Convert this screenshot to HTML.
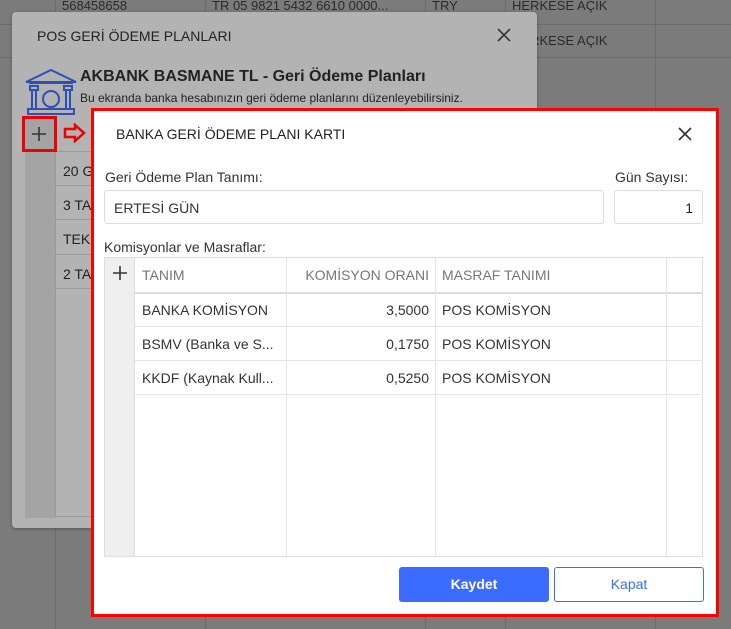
<!DOCTYPE html>
<html><head><meta charset="utf-8"><style>
*{box-sizing:border-box;margin:0;padding:0}
body{width:731px;height:629px;overflow:hidden;background:#7b7b7b;font-family:"Liberation Sans",sans-serif;position:relative;color:#222}
.a{position:absolute}
.bgt{color:#2a2a2a;font-size:13px}
.vl{position:absolute;width:1px;background:#6c6c6c}
.hl{position:absolute;height:1px;background:#6c6c6c}
.cell{position:absolute;font-size:14px;color:#333;white-space:nowrap}
</style></head><body>
<div class="hl" style="left:0;top:24px;width:731px"></div>
<div class="hl" style="left:0;top:57px;width:731px"></div>
<div class="vl" style="left:55px;top:0;height:629px"></div>
<div class="vl" style="left:205px;top:0;height:629px"></div>
<div class="vl" style="left:425px;top:0;height:629px"></div>
<div class="vl" style="left:505px;top:0;height:629px"></div>
<div class="vl" style="left:655px;top:0;height:629px"></div>
<div class="a bgt" style="left:62px;top:-2px">568458658</div>
<div class="a bgt" style="left:212px;top:-2px">TR 05 9821 5432 6610 0000...</div>
<div class="a bgt" style="left:432px;top:-2px">TRY</div>
<div class="a bgt" style="left:512px;top:-2px">HERKESE AÇIK</div>
<div class="a bgt" style="left:512px;top:33px">HERKESE AÇIK</div>
<div class="a" style="left:12px;top:12px;width:525px;height:516px;background:#b3b3b3;border-radius:4px;box-shadow:0 1px 3px rgba(0,0,0,.3)">
 <div class="a" style="left:25px;top:16px;font-size:14px;color:#222">POS GERİ ÖDEME PLANLARI</div>
 <svg class="a" style="left:485px;top:16px" width="14" height="14" viewBox="0 0 14 14" stroke="#333" stroke-width="1.6"><path d="M1 1L13 13M13 1L1 13"/></svg>
 <div class="a" style="left:68px;top:56px;font-size:16px;font-weight:bold;color:#222">AKBANK BASMANE TL - Geri Ödeme Planları</div>
 <div class="a" style="left:68px;top:79px;font-size:12px;color:#222">Bu ekranda banka hesabınızın geri ödeme planlarını düzenleyebilirsiniz.</div>
 <svg class="a" style="left:12px;top:56px" width="54" height="48" viewBox="0 0 54 48" fill="none" stroke="#2f4fb8" stroke-width="2"><path d="M2 14 L27 2 L52 14 Z"/><path d="M5 15h44"/><rect x="6" y="18" width="8" height="4"/><rect x="40" y="18" width="8" height="4"/><path d="M8 22v18M12 22v18M42 22v18M46 22v18"/><rect x="4" y="41" width="46" height="5"/><circle cx="27" cy="31" r="8"/></svg>
 <div class="a" style="left:13px;top:106px;width:30px;height:400px;background:#a4a4a4"></div>
 <div class="a" style="left:43px;top:106px;width:1px;height:400px;background:#999"></div>
 <div class="a" style="left:43px;top:139px;width:480px;height:1px;background:#9c9c9c"></div>
 <div class="a" style="left:43px;top:173px;width:480px;height:1px;background:#9c9c9c"></div>
 <div class="a" style="left:43px;top:207px;width:480px;height:1px;background:#9c9c9c"></div>
 <div class="a" style="left:43px;top:242px;width:480px;height:1px;background:#9c9c9c"></div>
 <div class="a" style="left:43px;top:276px;width:480px;height:1px;background:#9c9c9c"></div>
 <div class="a" style="left:43px;top:504px;width:480px;height:1px;background:#9c9c9c"></div>
 <div class="a" style="left:51px;top:151px;font-size:14px">20 G</div>
 <div class="a" style="left:51px;top:185px;font-size:14px">3 TA</div>
 <div class="a" style="left:51px;top:219px;font-size:14px">TEK</div>
 <div class="a" style="left:51px;top:254px;font-size:14px">2 TA</div>
</div>
<div class="a" style="left:22px;top:116px;width:35px;height:36px;border:3px solid #e00"></div>
<svg class="a" style="left:32px;top:127px" width="14" height="14" viewBox="0 0 14 14" stroke="#333" stroke-width="1.6"><path d="M7 0V14M0 7H14"/></svg>
<svg class="a" style="left:63px;top:123px" width="24" height="20" viewBox="0 0 24 20" fill="none" stroke="#e00" stroke-width="2.5"><path d="M2 6H12V2L21 10L12 18V14H2Z"/></svg>
<div class="a" style="left:91px;top:108px;width:628px;height:509px;border:3px solid #f00;background:#fff">
 <div class="a" style="left:22px;top:15px;font-size:14px">BANKA GERİ ÖDEME PLANI KARTI</div>
 <svg class="a" style="left:584px;top:16px" width="14" height="14" viewBox="0 0 14 14" stroke="#333" stroke-width="1.6"><path d="M1 1L13 13M13 1L1 13"/></svg>
 <div class="a" style="left:11px;top:58px;font-size:14px;color:#333">Geri Ödeme Plan Tanımı:</div>
 <div class="a" style="left:521px;top:58px;font-size:14px;color:#333">Gün Sayısı:</div>
 <div class="a" style="left:10px;top:79px;width:500px;height:34px;border:1px solid #ddd;border-radius:3px;padding:9px 9px;font-size:14px;color:#333">ERTESİ GÜN</div>
 <div class="a" style="left:520px;top:79px;width:89px;height:34px;border:1px solid #ddd;border-radius:3px;padding:9px 9px;font-size:14px;text-align:right">1</div>
 <div class="a" style="left:10px;top:128px;font-size:14px;color:#333">Komisyonlar ve Masraflar:</div>
 <div class="a" style="left:10px;top:146px;width:599px;height:300px;border:1px solid #ddd">
  <div class="a" style="left:0;top:0;width:30px;height:298px;background:#efefef;border-right:1px solid #ddd"></div>
  <svg class="a" style="left:8px;top:8px" width="14" height="14" viewBox="0 0 14 14" stroke="#333" stroke-width="1.6"><path d="M7 0V14M0 7H14"/></svg>
  <div class="a" style="left:30px;top:34px;width:568px;height:2px;background:#ddd"></div>
  <div class="a" style="left:30px;top:68px;width:568px;height:1px;background:#e4e4e4"></div>
  <div class="a" style="left:30px;top:102px;width:568px;height:1px;background:#e4e4e4"></div>
  <div class="a" style="left:30px;top:136px;width:568px;height:1px;background:#e4e4e4"></div>
  <div class="a" style="left:181px;top:0;width:1px;height:298px;background:#e4e4e4"></div>
  <div class="a" style="left:330px;top:0;width:1px;height:298px;background:#e4e4e4"></div>
  <div class="a" style="left:561px;top:0;width:1px;height:298px;background:#e4e4e4"></div>
  <div class="cell" style="left:37px;top:9px;color:#777">TANIM</div>
  <div class="cell" style="left:182px;width:142px;text-align:right;top:9px;color:#777">KOMİSYON ORANI</div>
  <div class="cell" style="left:337px;top:9px;color:#777">MASRAF TANIMI</div>
  <div class="cell" style="left:37px;top:44px">BANKA KOMİSYON</div>
  <div class="cell" style="left:182px;width:142px;text-align:right;top:44px">3,5000</div>
  <div class="cell" style="left:337px;top:44px">POS KOMİSYON</div>
  <div class="cell" style="left:37px;top:78px">BSMV (Banka ve S...</div>
  <div class="cell" style="left:182px;width:142px;text-align:right;top:78px">0,1750</div>
  <div class="cell" style="left:337px;top:78px">POS KOMİSYON</div>
  <div class="cell" style="left:37px;top:112px">KKDF (Kaynak Kull...</div>
  <div class="cell" style="left:182px;width:142px;text-align:right;top:112px">0,5250</div>
  <div class="cell" style="left:337px;top:112px">POS KOMİSYON</div>
 </div>
 <div class="a" style="left:305px;top:456px;width:150px;height:35px;background:#3b6cff;border-radius:3px;color:#fff;font-size:14px;font-weight:bold;text-align:center;line-height:35px">Kaydet</div>
 <div class="a" style="left:460px;top:456px;width:150px;height:35px;border:1px solid #3b6cff;border-radius:3px;color:#3b6cff;font-size:14px;text-align:center;line-height:33px">Kapat</div>
</div>
</body></html>
